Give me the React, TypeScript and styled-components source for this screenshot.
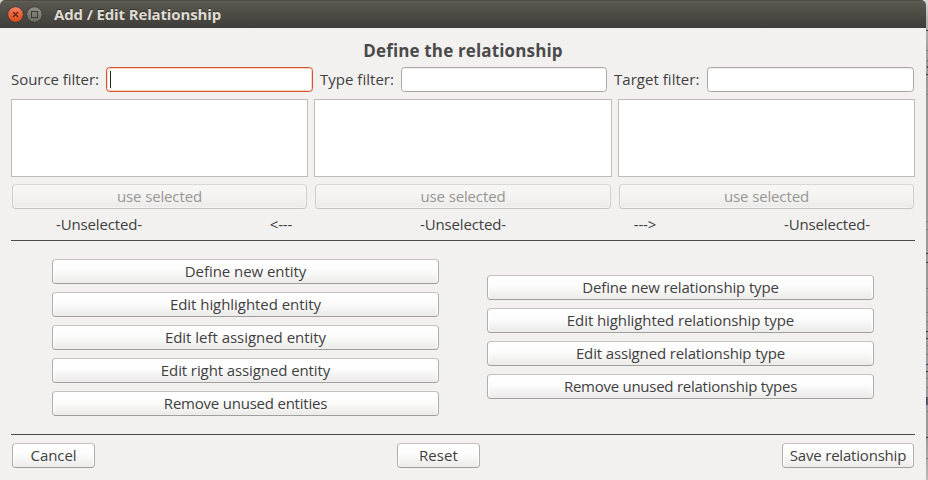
import React from 'react';
import styled, { createGlobalStyle } from 'styled-components';

const GlobalStyle = createGlobalStyle`
  * { box-sizing: border-box; }
  body { margin: 0; overflow: hidden; background: #a4a4a4; }
`;

const Desktop = styled.div`
  display: flex;
  width: 928px;
  height: 480px;
  overflow: hidden;
  background: linear-gradient(#d8d8d7 0, #b5b5b5 20px, #9b9b9c 60px, #9b9b9c 440px, #b9b9b9 480px);
  font-family: 'Open Sans', 'Noto Sans', sans-serif;
  font-size: 15px;
  color: #3f3f3f;
`;

const Window = styled.div`
  display: flex;
  flex-direction: column;
  width: 926px;
  height: 480px;
  background: #f2f1f0;
  border-radius: 5px 5px 0 0;
`;

const TitleBar = styled.header`
  display: flex;
  align-items: center;
  flex: none;
  height: 28px;
  padding: 1px 0 0 7px;
  border-radius: 5px 5px 0 0;
  background: linear-gradient(#504d46 0, #504d46 1px, #65625a 1px, #5a5850 2px, #3e3d38 28px);
`;

const Controls = styled.svg`
  display: block;
  flex: none;
`;

const WindowTitle = styled.div`
  margin-left: 10px;
  padding-bottom: 2px;
  font-size: 15px;
  font-weight: 700;
  line-height: 20px;
  letter-spacing: -0.14px;
  color: #dfdbd2;
  text-shadow: 0 -1px 0 #33322e;
  white-space: nowrap;
`;

const Content = styled.main`
  display: flex;
  flex-direction: column;
  flex: 1;
  padding: 11px 11px 12px;
`;

const Heading = styled.h1`
  margin: 0;
  height: 28px;
  padding-top: 1px;
  font-size: 17px;
  font-weight: 700;
  line-height: 22px;
  letter-spacing: 0.15px;
  text-align: center;
  color: #4a4a4a;
`;

const Filters = styled.div`
  display: grid;
  grid-template-columns: 95px 207px 88px 206px 100px 207px;
  height: 25px;
`;

const FilterLabel = styled.label<{ $indent?: number; $track: number }>`
  padding-left: ${p => p.$indent ?? 0}px;
  line-height: 25px;
  letter-spacing: ${p => p.$track}px;
  white-space: nowrap;
`;

const Field = styled.div<{ $focused?: boolean }>`
  height: 25px;
  padding: 3px;
  border: 1px solid ${p => (p.$focused ? '#d4552c' : '#aaa7a3')};
  border-radius: 3.5px;
  background: #fff;
  box-shadow: ${p => (p.$focused ? 'inset 0 0 0 1px #f8d5c8' : 'inset 0 1px 0 #f0efee')};
`;

const Caret = styled.div`
  width: 1px;
  height: 17px;
  background: #1d1d1d;
`;

const Lists = styled.div`
  display: grid;
  grid-template-columns: 297px 298px 297px;
  gap: 6px;
  margin-top: 7px;
`;

const ListBox = styled.div`
  height: 78px;
  border: 1px solid #bdbcb8;
  background: #fff;
`;

const UseButtons = styled.div`
  display: grid;
  grid-template-columns: 295px 296px 295px;
  gap: 8px;
  margin-top: 7px;
  padding-left: 1px;
`;

const Button = styled.button<{ $track?: number; $width?: number }>`
  display: block;
  width: ${p => (p.$width ? `${p.$width}px` : '100%')};
  height: 25px;
  padding: 0;
  border: 1px solid;
  border-color: #c4c2bf #b0aeaa #a19f9b;
  border-radius: 4px;
  background: linear-gradient(#fff 0, #fcfcfc 45%, #ebeae9 100%);
  box-shadow: inset 2px 0 2px -1px #fff, inset -2px 0 2px -1px #fff;
  font: inherit;
  line-height: 23px;
  letter-spacing: ${p => p.$track ?? 0}px;
  color: #3f3f3f;
  white-space: nowrap;

  &:disabled {
    border-color: #dad8d6 #d0cecb #c6c4c1;
    background: linear-gradient(#f7f7f6, #f4f3f2 50%, #ebeae9);
    box-shadow: inset 0 0 0 1px #f5f4f3;
    color: #979695;
  }
`;

const Assignment = styled.div`
  display: grid;
  grid-template-columns: repeat(5, 176px);
  gap: 6px;
  height: 31px;
  line-height: 31px;
  letter-spacing: -0.14px;
  text-align: center;
  white-space: nowrap;
`;

const Rule = styled.hr`
  flex: none;
  width: 904px;
  height: 1px;
  margin: 0;
  border: 0;
  background: #4c4b49;
`;

const Actions = styled.div`
  display: flex;
  align-items: flex-start;
  justify-content: space-between;
  height: 193px;
  padding: 0 41px;
`;

const ActionColumn = styled.div<{ $top: number }>`
  display: grid;
  gap: 8px;
  width: 387px;
  padding-top: ${p => p.$top}px;
`;

const Footer = styled.footer`
  display: grid;
  grid-template-columns: 385px 385px 132px;
  margin-top: 8px;
  padding-left: 1px;
`;

const Backdrop = styled.svg`
  display: block;
  flex: none;
`;

const entityActions = [
  { label: 'Define new entity', track: -0.06 },
  { label: 'Edit highlighted entity', track: -0.05 },
  { label: 'Edit left assigned entity', track: -0.03 },
  { label: 'Edit right assigned entity', track: -0.1 },
  { label: 'Remove unused entities', track: -0.22 },
];

const typeActions = [
  { label: 'Define new relationship type', track: -0.14 },
  { label: 'Edit highlighted relationship type', track: -0.09 },
  { label: 'Edit assigned relationship type', track: -0.14 },
  { label: 'Remove unused relationship types', track: -0.26 },
];

const faintLines = [50, 94, 221, 229, 288, 312, 321, 345, 354, 378, 387, 411, 458];
const darkLines = [30, 74, 253, 262, 331, 338, 371, 437];

export default function App() {
  return (
    <>
      <GlobalStyle />
      <Desktop>
        <Window>
          <TitleBar>
            <Controls width="37" height="20" viewBox="0 0 37 20">
              <defs>
                <linearGradient id="close" x1="0" y1="0" x2="0" y2="1">
                  <stop offset="0" stopColor="#f58463" />
                  <stop offset="0.5" stopColor="#ea6338" />
                  <stop offset="1" stopColor="#dc4b1d" />
                </linearGradient>
                <linearGradient id="maximize" x1="0" y1="0" x2="0" y2="1">
                  <stop offset="0" stopColor="#918f87" />
                  <stop offset="1" stopColor="#6a6962" />
                </linearGradient>
              </defs>
              <circle cx="8.5" cy="9.5" r="7.8" fill="url(#close)" stroke="#35332e" strokeWidth="0.8" />
              <path d="M6 7l5 5M11 7l-5 5" stroke="#5a2514" strokeWidth="1.2" />
              <circle cx="27.5" cy="9.5" r="7.8" fill="url(#maximize)" stroke="#35332e" strokeWidth="0.8" />
              <rect x="24.5" y="6.5" width="6" height="6" fill="none" stroke="#3b3a35" />
            </Controls>
            <WindowTitle>Add / Edit Relationship</WindowTitle>
          </TitleBar>
          <Content>
            <Heading>Define the relationship</Heading>
            <Filters>
              <FilterLabel $track={-0.04}>Source filter:</FilterLabel>
              <Field $focused><Caret /></Field>
              <FilterLabel $indent={7} $track={0.02}>Type filter:</FilterLabel>
              <Field />
              <FilterLabel $indent={7} $track={0.03}>Target filter:</FilterLabel>
              <Field />
            </Filters>
            <Lists>
              <ListBox />
              <ListBox />
              <ListBox />
            </Lists>
            <UseButtons>
              <Button disabled $track={-0.14}>use selected</Button>
              <Button disabled $track={-0.14}>use selected</Button>
              <Button disabled $track={-0.14}>use selected</Button>
            </UseButtons>
            <Assignment>
              <span>-Unselected-</span>
              <span>&lt;---</span>
              <span>-Unselected-</span>
              <span>---&gt;</span>
              <span>-Unselected-</span>
            </Assignment>
            <Rule />
            <Actions>
              <ActionColumn $top={18}>
                {entityActions.map(a => <Button key={a.label} $track={a.track}>{a.label}</Button>)}
              </ActionColumn>
              <ActionColumn $top={34}>
                {typeActions.map(a => <Button key={a.label} $track={a.track}>{a.label}</Button>)}
              </ActionColumn>
            </Actions>
            <Rule />
            <Footer>
              <Button $width={83} $track={-0.1}>Cancel</Button>
              <Button $width={83} $track={0.1}>Reset</Button>
              <Button $width={132} $track={-0.2}>Save relationship</Button>
            </Footer>
          </Content>
        </Window>
        <Backdrop width="2" height="480" viewBox="0 0 2 480">
          {faintLines.map(y => <rect key={y} y={y} width="2" height="1" fill="#7d7d7d" />)}
          {darkLines.map(y => <rect key={y} y={y} width="2" height="1" fill="#383838" />)}
          <rect x="1" y="60" width="1" height="2" fill="#a8703f" />
          <rect x="1" y="66" width="1" height="2" fill="#62422b" />
          <rect y="364" width="2" height="1" fill="#324a70" />
          <rect y="397" width="1" height="8" fill="#6b3c36" />
          <rect x="1" y="397" width="1" height="8" fill="#3e6c8c" />
        </Backdrop>
      </Desktop>
    </>
  );
}
